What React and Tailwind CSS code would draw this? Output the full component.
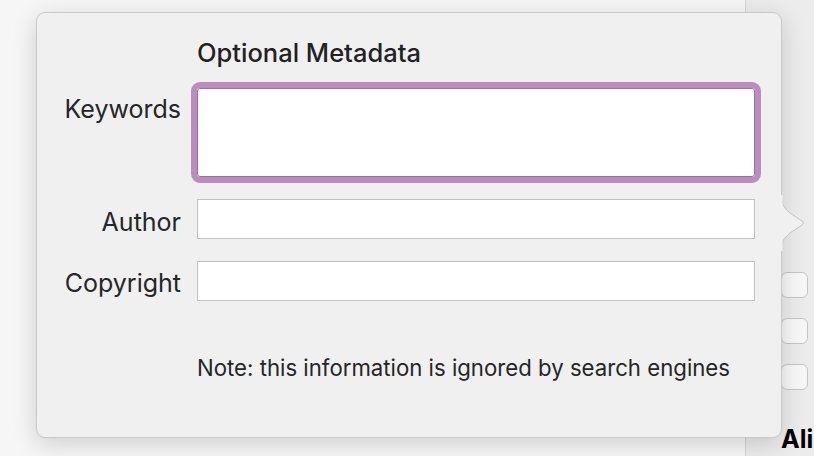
export default function App() {
  const font = { fontFamily: 'Inter, "Noto Sans", sans-serif' };
  return (
    <div className="relative w-[814px] h-[456px] overflow-hidden flex bg-[#f6f6f6]" style={font}>
      <div className="flex-1" />
      <div className="w-[69px] h-full border-l border-[#d6d6d6] bg-[#ececec] flex flex-col pl-[35px] pt-[272px]">
        <div className="flex flex-col gap-[20px]">
          <div className="w-[27px] h-[26px] rounded-[6px] border border-[#c6c6c6] bg-[#f7f7f7]" />
          <div className="w-[27px] h-[26px] rounded-[6px] border border-[#c6c6c6] bg-[#f7f7f7]" />
          <div className="w-[27px] h-[26px] rounded-[6px] border border-[#c6c6c6] bg-[#f7f7f7]" />
        </div>
        <div className="mt-[34px] text-[25px] font-bold text-black leading-[30px] whitespace-nowrap">Ali</div>
      </div>

      {/* Popover */}
      <div className="absolute left-[36px] top-[12px] w-[746px] h-[426px] rounded-[9px] bg-[#f0f0f0] border border-[#c9c9c9] shadow-[0_6px_24px_rgba(0,0,0,0.16)]">
        <svg className="absolute left-[744px] top-[182px]" width="28" height="56" viewBox="0 0 28 56">
          <path d="M0 0 C0 9, 3 13, 9 18 L21 26 Q24 28 21 30 L9 38 C3 43, 0 47, 0 56" fill="#f0f0f0" stroke="#c3c3c3" strokeWidth="1" />
          <rect x="0" y="0" width="1.5" height="56" fill="#f0f0f0" />
        </svg>
        <div className="grid grid-cols-[144px_558px] gap-x-[16px] pt-[25px] text-[#262626]">
          <div />
          <div className="text-[25.5px] font-medium leading-[30px] text-[#222]">Optional Metadata</div>

          <div className="text-right text-[25px] leading-[30px] mt-[26px] self-start">Keywords</div>
          <div className="mt-[20px]">
            <div className="h-[89px] bg-white border border-[#9f6fa1] outline-[6px] outline-solid outline-[#bb8cbd] rounded-[3px]" />
          </div>

          <div className="text-right text-[25px] leading-[30px] mt-[30px]">Author</div>
          <div className="mt-[22px] h-[40px] bg-white border border-[#c2c2c2]" />

          <div className="text-right text-[25px] leading-[30px] mt-[29px]">Copyright</div>
          <div className="mt-[22px] h-[40px] bg-white border border-[#c2c2c2]" />

          <div />
          <div className="mt-[53px] text-[22.2px] leading-[28px] text-[#262626] whitespace-nowrap">Note: this information is ignored by search engines</div>
        </div>
      </div>
    </div>
  );
}
